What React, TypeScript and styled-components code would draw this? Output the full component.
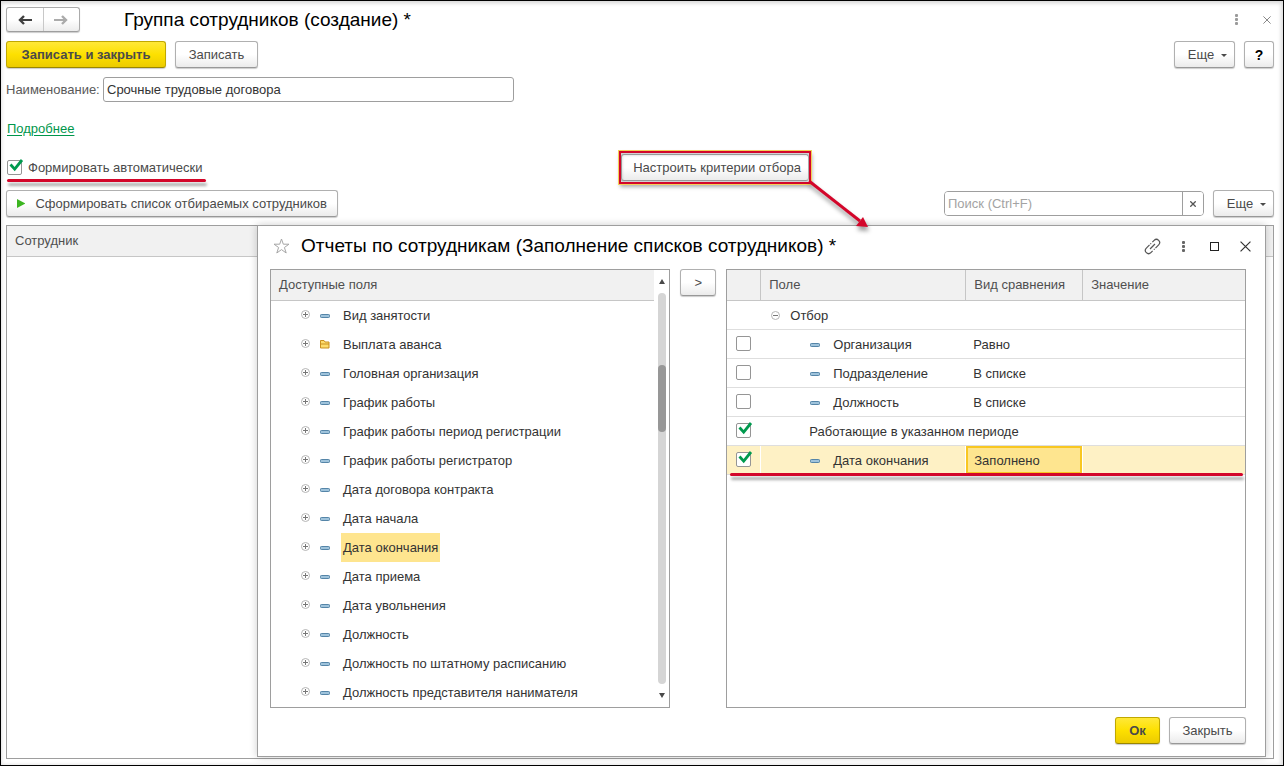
import React from 'react';
import styled, { createGlobalStyle, css } from 'styled-components';

const GlobalStyle = createGlobalStyle`
  *, *::before, *::after { box-sizing: border-box; }
  body { margin: 0; background: #fff; }
  body, button, input, table { font-family: 'Liberation Sans', Arial, sans-serif; font-size: 13px; line-height: 16px; color: #333; }
  button { cursor: pointer; }
`;

const line = '#9e9e9e';

const Window = styled.main`
  display: flex;
  flex-direction: column;
  min-height: 100vh;
  padding: 6px 9px 6px 5px;
  border: 1px solid #000;
  box-shadow: inset 0 2px 4px #d8d8d8, inset -2px 0 4px #e4e4e4;
`;

const Header = styled.header`
  display: flex;
  align-items: center;
  height: 25px;
`;

const NavGroup = styled.nav`
  display: flex;
  width: 74px;
  height: 25px;
  margin-right: 44px;
  border: 1px solid #ababab;
  border-bottom-color: ${line};
  border-radius: 3px;
  background: linear-gradient(#fff 50%, #ececec);
  box-shadow: 0 1px 1px #ccc;
`;

const NavButton = styled.button`
  flex: 1;
  display: grid;
  place-items: center;
  padding: 0;
  border: 0;
  background: none;
  & + & { border-left: 1px solid #c8c8c8; }
`;

const Title = styled.h1`
  flex: 1;
  margin: 0;
  font-size: 19px;
  line-height: 24px;
  font-weight: 400;
  color: #000;
`;

const WindowIcons = styled.div`
  display: flex;
  gap: 13px;
  margin-right: -1px;
`;

const IconButton = styled.button`
  display: grid;
  place-items: center;
  width: 17px;
  height: 20px;
  padding: 0;
  border: 0;
  background: none;
`;

const Toolbar = styled.div<{ $top: number }>`
  display: flex;
  align-items: center;
  gap: 9px;
  height: 27px;
  margin-top: ${p => p.$top}px;
`;

const Spacer = styled.div`
  flex: 1;
`;

const Button = styled.button<{ $primary?: boolean; $width?: number }>`
  display: inline-flex;
  align-items: center;
  justify-content: center;
  height: 27px;
  ${p => p.$width && css`width: ${p.$width}px;`}
  padding: 0 12px;
  border: 1px solid #b0b0b0;
  border-bottom-color: #989898;
  border-radius: 3px;
  background: linear-gradient(#fff 50%, #ebebeb);
  box-shadow: 0 1px 1px #ccc;
  color: #4a4a4a;
  white-space: nowrap;
  ${p => p.$primary && css`
    border-color: #c0a800;
    border-bottom-color: #9a8600;
    background: linear-gradient(#ffe838, #fde000 50%, #eccb00);
    font-weight: 700;
  `}
`;

const ConfigureButton = styled(Button)`
  padding: 0 8px 0 12px;
`;

const Caret = styled.span`
  margin: 2px 0 0 7px;
  border: 3px solid transparent;
  border-top-color: #4a4a4a;
  border-bottom: 0;
`;

const MoreButton = styled(Button)`
  width: 61px;
  padding: 0 6px 0 12px;
`;

const HelpButton = styled(Button)`
  width: 30px;
  padding: 0;
  color: #000;
  font-size: 14px;
  font-weight: 700;
`;

const RunButton = styled(Button)`
  width: 332px;
  justify-content: flex-start;
  gap: 10px;
  padding: 0 10px;
`;

const Field = styled.div`
  display: flex;
  align-items: center;
  gap: 5px;
  margin-top: 9px;
`;

const FieldLabel = styled.label`
  width: 92px;
  color: #595959;
`;

const TextInput = styled.input`
  width: 411px;
  height: 25px;
  padding: 0 3px;
  border: 1px solid ${line};
  border-radius: 3px;
  background: #fff;
`;

const DetailsLink = styled.a`
  align-self: flex-start;
  margin: 19px 0 0 1px;
  color: #00964b;
  text-underline-offset: 2px;
`;

const AutoRow = styled.div`
  display: grid;
  grid-template-columns: 615fr 653fr;
  align-items: center;
  height: 27px;
  margin-top: 17px;
`;

const Marked = styled.div`
  position: relative;
  justify-self: start;
`;

const AutoLabel = styled.label`
  display: flex;
  align-items: center;
  gap: 6px;
  padding-left: 1px;
  color: #4a4a4a;
`;

const RedLine = styled.span<{ $table?: boolean }>`
  position: absolute;
  z-index: 3;
  left: ${p => (p.$table ? 3 : 1)}px;
  right: ${p => (p.$table ? 2 : -4)}px;
  top: ${p => (p.$table ? 203 : 19)}px;
  height: 3px;
  border-radius: 2px;
  background: #d3062a;
  box-shadow: 1px 4px 3px #0005;
`;

const RedFrame = styled.span`
  position: absolute;
  inset: -3px -2px;
  border: 2px solid #d3062a;
  outline: 1px solid #f3cf59;
  box-shadow: 1px 3px 4px #0005, inset 1px 2px 3px #0003;
  pointer-events: none;
`;

const Arrow = styled.svg`
  position: absolute;
  z-index: 4;
  left: 100%;
  top: 100%;
  overflow: visible;
  filter: drop-shadow(1px 4px 2px #0006);
  pointer-events: none;
`;

const CheckWrap = styled.span`
  position: relative;
  display: block;
  width: 15px;
  height: 15px;
  svg { position: absolute; left: 2px; top: -1px; pointer-events: none; display: none; }
  input:checked + svg { display: block; }
`;

const CheckInput = styled.input`
  appearance: none;
  display: block;
  width: 15px;
  height: 15px;
  margin: 0;
  border: 1px solid #959595;
  border-radius: 2px;
  background: #fff;
`;

const Search = styled.div`
  display: flex;
  width: 260px;
  height: 25px;
  border: 1px solid ${line};
  border-radius: 4px;
  overflow: hidden;
`;

const SearchInput = styled.input`
  flex: 1;
  min-width: 0;
  padding: 0 3px;
  border: 0;
  background: #fff;
  &::placeholder { color: #a3a3a3; opacity: 1; }
`;

const ClearButton = styled.button`
  width: 21px;
  padding: 0;
  border: 0;
  border-left: 1px solid ${line};
  background: #fff;
  display: grid;
  place-items: center;
`;

const Employees = styled.section`
  position: relative;
  flex: 1;
  min-height: 534px;
  margin-top: 8px;
  border: 1px solid ${line};
`;

const Grid = styled.table`
  width: 100%;
  border-collapse: separate;
  border-spacing: 0;
  table-layout: fixed;
`;

const HeadCell = styled.th`
  height: 31px;
  padding: 0 8px;
  border-bottom: 1px solid #c6c6c6;
  background: #f1f1f1;
  color: #4f4f4f;
  font-weight: 400;
  text-align: left;
  & + & { border-left: 1px solid #c6c6c6; }
`;

const Dialog = styled.section`
  position: absolute;
  z-index: 2;
  top: -1px;
  right: 7px;
  bottom: 1px;
  left: 250px;
  display: flex;
  flex-direction: column;
  padding: 0 19px 12px 12px;
  border: 1px solid ${line};
  background: #fff;
  box-shadow: 0 0 8px #0003;
`;

const DialogHeader = styled.header`
  display: flex;
  align-items: center;
  gap: 11px;
  height: 43px;
  margin-bottom: 1px;
  padding: 0 0 2px 3px;
`;

const DialogIcons = styled.div`
  display: flex;
  gap: 14px;
  margin-right: -8px;
`;

const Panels = styled.div`
  flex: 1;
  display: flex;
  align-items: stretch;
  gap: 10px;
`;

const FieldsPanel = styled.div`
  flex: 400 1 0;
  display: flex;
  border: 1px solid ${line};
`;

const FieldsBody = styled.div`
  flex: 1;
  min-width: 0;
`;

const PanelHead = styled.h2`
  margin: 0;
  height: 31px;
  padding: 7px 8px 0;
  border-bottom: 1px solid #c6c6c6;
  background: #f1f1f1;
  color: #4f4f4f;
  font-size: 13px;
  font-weight: 400;
`;

const Tree = styled.ul`
  margin: 0;
  padding: 0;
  list-style: none;
`;

const TreeItem = styled.li`
  display: flex;
  align-items: center;
  height: 29px;
  padding-left: 30px;
`;

const TreeText = styled.span<{ $active?: boolean }>`
  margin-left: 11px;
  padding: 0 2px;
  line-height: 29px;
  background: ${p => (p.$active ? '#fee58f' : 'none')};
`;

const Expander = styled.button`
  display: block;
  width: 9px;
  height: 9px;
  margin: 0 10px 2px 0;
  padding: 0;
  border: 0;
  background: none;
  svg { display: block; }
`;

const ScrollBar = styled.div`
  display: flex;
  flex-direction: column;
  align-items: center;
  width: 15px;
`;

const ScrollArrow = styled.button<{ $down?: boolean }>`
  display: grid;
  place-items: center;
  width: 15px;
  height: 23px;
  padding: 0;
  border: 0;
  background: none;
  svg { transform: ${p => (p.$down ? 'rotate(180deg)' : 'none')}; }
`;

const Track = styled.div`
  flex: 1;
  width: 8px;
  padding-top: 72px;
  border-radius: 4px;
  background: #d5d5d5;
`;

const Thumb = styled.div`
  height: 67px;
  border-radius: 4px;
  background: #979797;
`;

const FilterPanel = styled.div`
  position: relative;
  flex: 520 1 0;
  border: 1px solid ${line};
`;

const Row = styled.tr<{ $selected?: boolean }>`
  background: ${p => (p.$selected ? '#fef1c5' : '#fff')};
  ${p => p.$selected && css`td + td { border-left: 1px solid #fff; }`}
`;

const Cell = styled.td<{ $current?: boolean }>`
  height: 29px;
  padding: 2px 8px 0;
  border-bottom: 1px solid #dedede;
  white-space: nowrap;
  ${p => p.$current && css`
    background: #fee58f;
    box-shadow: inset 0 0 0 2px #f8c722;
  `}
`;

const CheckCell = styled(Cell)`
  padding: 0 9px 2px;
`;

const CellContent = styled.div<{ $indent: number }>`
  display: flex;
  align-items: center;
  padding-left: ${p => p.$indent}px;
`;

const CellLabel = styled.span`
  margin-left: 13px;
`;

const Footer = styled.footer`
  display: flex;
  justify-content: flex-end;
  gap: 9px;
  margin-top: 9px;
`;

const BackArrow = ({ color }: { color: string }) => (
  <svg width="14" height="10" viewBox="0 0 14 10" fill="none" stroke={color} strokeWidth="2">
    <path d="M14 5H2" /><path d="M6 1 2 5l4 4" strokeWidth="2.4" />
  </svg>
);
const ForwardArrow = ({ color }: { color: string }) => (
  <svg width="14" height="10" viewBox="0 0 14 10" fill="none" stroke={color} strokeWidth="2">
    <path d="M0 5h12" /><path d="m8 1 4 4-4 4" strokeWidth="2.4" />
  </svg>
);
const Dots = ({ color }: { color: string }) => (
  <svg width="3" height="11" viewBox="0 0 3 11" fill={color}>
    <rect width="3" height="3" rx="1" /><rect y="4" width="3" height="3" rx="1" /><rect y="8" width="3" height="3" rx="1" />
  </svg>
);
const Cross = ({ size, color, width = 1 }: { size: number; color: string; width?: number }) => (
  <svg width={size} height={size} viewBox="0 0 10 10" stroke={color} strokeWidth={(width * 10) / size}>
    <path d="m.5.5 9 9m0-9-9 9" />
  </svg>
);
const Star = () => (
  <svg width="17" height="16" viewBox="0 0 17 16" fill="#fff" stroke="#a6a6a6">
    <path d="m8.500 1 1.800 5.200h5.700l-4.600 3.300 1.800 5.500-4.700-3.400L3.800 15l1.800-5.500L1 6.200h5.700z" />
  </svg>
);
const Link = () => (
  <svg width="17" height="17" viewBox="-8.5 -8.500 17 17" fill="none" stroke="#555" strokeWidth="1.200">
    <g transform="rotate(-45)">
      <path d="M-1 -3.200H-5.500a3.200 3.200 0 0 0 0 6.400H-3M-1.300 3.200H-.2" />
      <path d="M1 3.200H5.500a3.200 3.200 0 0 0 0-6.400H3M1.300-3.200H.2" />
      <path d="M-3.500 0h7" />
    </g>
  </svg>
);
const Item = () => (
  <svg width="10" height="4" viewBox="0 0 10 4">
    <rect x=".5" y=".5" width="9" height="3" rx=".8" fill="#9fc3db" stroke="#5585a8" />
  </svg>
);
const Folder = () => (
  <svg width="10" height="9" viewBox="0 0 10 9" fill="#fddc6c" stroke="#c98f1e">
    <path d="M.5 8V.5h3.500l1 1.500h4V8zM.5 4h8.500" />
  </svg>
);
const Sign = ({ plus }: { plus?: boolean }) => (
  <svg width="9" height="9" viewBox="0 0 9 9" fill="none">
    <circle cx="4.500" cy="4.500" r="4" stroke="#b4b4b4" />
    <path d={plus ? 'M2 4.500h5M4.500 2v5' : 'M2 4.500h5'} stroke="#777" />
  </svg>
);
const Triangle = () => (
  <svg width="6" height="5" viewBox="0 0 6 5" fill="#4a4a4a"><path d="M3 0 6 5H0z" /></svg>
);

const Check = ({ checked, id, label }: { checked?: boolean; id?: string; label?: string }) => (
  <CheckWrap>
    <CheckInput type="checkbox" id={id} aria-label={label} defaultChecked={checked} />
    <svg width="15" height="14" viewBox="0 0 15 14" fill="none" stroke="#009a4e" strokeWidth="2.800">
      <path d="m1.500 5.500 4.200 4.600L13 1" />
    </svg>
  </CheckWrap>
);

const fields = [
  'Вид занятости', 'Выплата аванса', 'Головная организация', 'График работы',
  'График работы период регистрации', 'График работы регистратор', 'Дата договора контракта',
  'Дата начала', 'Дата окончания', 'Дата приема', 'Дата увольнения', 'Должность',
  'Должность по штатному расписанию', 'Должность представителя нанимателя',
];

const filters = [
  { name: 'Организация', kind: 'Равно' },
  { name: 'Подразделение', kind: 'В списке' },
  { name: 'Должность', kind: 'В списке' },
  { name: 'Работающие в указанном периоде', kind: '', checked: true, wide: true },
  { name: 'Дата окончания', kind: 'Заполнено', checked: true, selected: true },
];

export default function App() {
  return (
    <Window>
      <GlobalStyle />
      <Header>
        <NavGroup>
          <NavButton aria-label="Назад"><BackArrow color="#404040" /></NavButton>
          <NavButton aria-label="Вперед"><ForwardArrow color="#ababab" /></NavButton>
        </NavGroup>
        <Title>Группа сотрудников (создание) *</Title>
        <WindowIcons>
          <IconButton aria-label="Меню"><Dots color="#9a9a9a" /></IconButton>
          <IconButton aria-label="Закрыть окно"><Cross size={8} color="#888" /></IconButton>
        </WindowIcons>
      </Header>

      <Toolbar $top={9}>
        <Button $primary $width={160}>Записать и закрыть</Button>
        <Button $width={83}>Записать</Button>
        <Spacer />
        <MoreButton>Еще<Caret /></MoreButton>
        <HelpButton>?</HelpButton>
      </Toolbar>

      <Field>
        <FieldLabel htmlFor="name">Наименование:</FieldLabel>
        <TextInput id="name" defaultValue="Срочные трудовые договора" />
      </Field>

      <DetailsLink href="#details">Подробнее</DetailsLink>

      <AutoRow>
        <Marked>
          <AutoLabel htmlFor="auto"><Check id="auto" checked />Формировать автоматически</AutoLabel>
          <RedLine />
        </Marked>
        <Marked>
          <ConfigureButton $width={188}>Настроить критерии отбора</ConfigureButton>
          <RedFrame />
          <Arrow width="58" height="48" viewBox="0 0 58 48">
            <path d="M0 0 51 40" stroke="#d3062a" strokeWidth="3" />
            <path d="m59 46-12-1 7-9z" fill="#d3062a" />
          </Arrow>
        </Marked>
      </AutoRow>

      <Toolbar $top={9}>
        <RunButton>
          <svg width="10" height="11" viewBox="0 0 10 11" fill="#3cb521"><path d="M0 0 10 5.500 0 11z" /></svg>
          Сформировать список отбираемых сотрудников
        </RunButton>
        <Spacer />
        <Search>
          <SearchInput aria-label="Поиск" placeholder="Поиск (Ctrl+F)" />
          <ClearButton aria-label="Очистить"><Cross size={6} color="#555" width={1.3} /></ClearButton>
        </Search>
        <MoreButton>Еще<Caret /></MoreButton>
      </Toolbar>

      <Employees>
        <Grid>
          <thead><tr><HeadCell>Сотрудник</HeadCell></tr></thead>
        </Grid>

        <Dialog role="dialog" aria-label="Отчеты по сотрудникам">
          <DialogHeader>
            <IconButton aria-label="В избранное"><Star /></IconButton>
            <Title as="h2">Отчеты по сотрудникам (Заполнение списков сотрудников) *</Title>
            <DialogIcons>
              <IconButton aria-label="Ссылка"><Link /></IconButton>
              <IconButton aria-label="Меню"><Dots color="#666" /></IconButton>
              <IconButton aria-label="Развернуть">
                <svg width="9" height="9" viewBox="0 0 9 9"><rect x=".5" y=".5" width="8" height="8" fill="none" stroke="#222" /></svg>
              </IconButton>
              <IconButton aria-label="Закрыть диалог"><Cross size={11} color="#333" width={1.2} /></IconButton>
            </DialogIcons>
          </DialogHeader>

          <Panels>
            <FieldsPanel>
              <FieldsBody>
                <PanelHead>Доступные поля</PanelHead>
                <Tree>
                  {fields.map((name, i) => (
                    <TreeItem key={name}>
                      <Expander aria-label={`Раскрыть: ${name}`}><Sign plus /></Expander>
                      {i === 1 ? <Folder /> : <Item />}
                      <TreeText $active={i === 8}>{name}</TreeText>
                    </TreeItem>
                  ))}
                </Tree>
              </FieldsBody>
              <ScrollBar>
                <ScrollArrow aria-label="Вверх"><Triangle /></ScrollArrow>
                <Track><Thumb /></Track>
                <ScrollArrow $down aria-label="Вниз"><Triangle /></ScrollArrow>
              </ScrollBar>
            </FieldsPanel>

            <Button $width={36}>&gt;</Button>

            <FilterPanel>
              <Grid>
                <colgroup>
                  <col width="33" /><col width="205" /><col width="117" /><col />
                </colgroup>
                <thead>
                  <tr>
                    <HeadCell aria-label="Использование" />
                    <HeadCell>Поле</HeadCell>
                    <HeadCell>Вид сравнения</HeadCell>
                    <HeadCell>Значение</HeadCell>
                  </tr>
                </thead>
                <tbody>
                  <Row>
                    <CheckCell />
                    <Cell colSpan={3}>
                      <CellContent $indent={3}><Expander aria-label="Свернуть: Отбор"><Sign /></Expander>Отбор</CellContent>
                    </Cell>
                  </Row>
                  {filters.map(f => (
                    <Row key={f.name} $selected={f.selected}>
                      <CheckCell><Check checked={f.checked} label={f.name} /></CheckCell>
                      {f.wide ? (
                        <Cell colSpan={3}><CellContent $indent={41}>{f.name}</CellContent></Cell>
                      ) : (
                        <>
                          <Cell><CellContent $indent={f.selected ? 41 : 42}><Item /><CellLabel>{f.name}</CellLabel></CellContent></Cell>
                          <Cell $current={f.selected}>{f.kind}</Cell>
                          <Cell />
                        </>
                      )}
                    </Row>
                  ))}
                </tbody>
              </Grid>
              <RedLine $table />
            </FilterPanel>
          </Panels>

          <Footer>
            <Button $primary $width={45}>Ок</Button>
            <Button $width={77}>Закрыть</Button>
          </Footer>
        </Dialog>
      </Employees>
    </Window>
  );
}
